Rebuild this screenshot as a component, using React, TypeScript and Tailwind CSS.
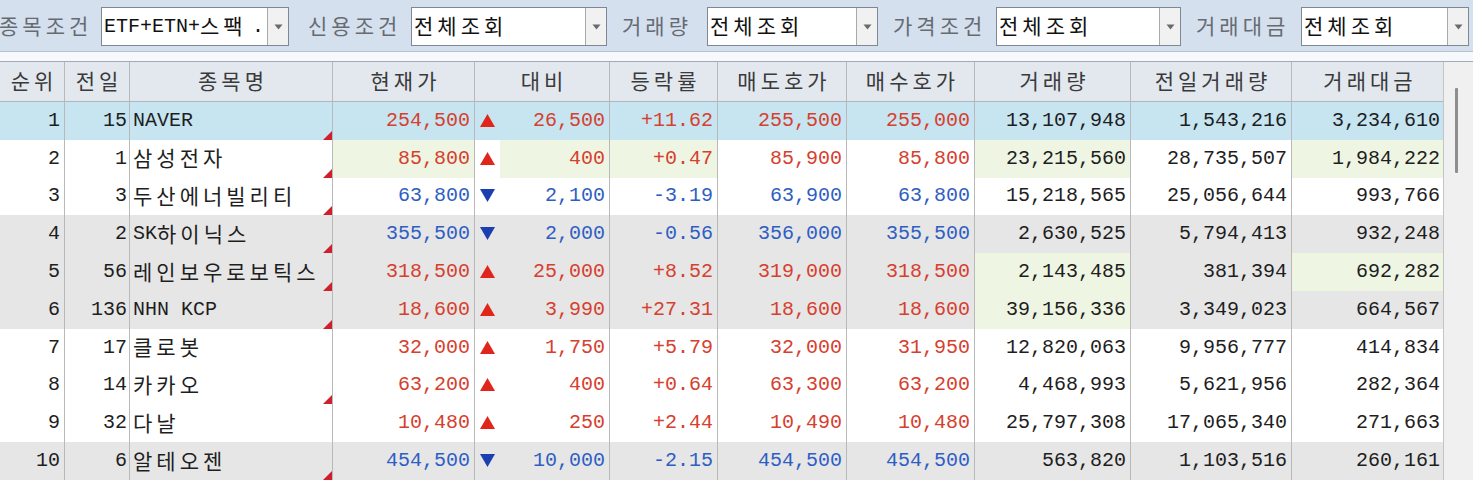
import React from 'react';

const KO_SPLIT = /([\uAC00-\uD7A3]+)/;
const KO_TEST = /[\uAC00-\uD7A3]/;

function Tx({ s }: { s: string }) {
  const parts = s.split(KO_SPLIT).filter((p) => p !== '');
  return (
    <>
      {parts.map((p, i) =>
        KO_TEST.test(p) ? (
          <span
            key={i}
            className={`relative -top-[1px] font-['Noto_Sans_CJK_KR'] text-[21px] tracking-[4px] ${i === parts.length - 1 ? '-mr-[4px]' : ''}`}
          >
            {p}
          </span>
        ) : (
          <span key={i}>{p}</span>
        )
      )}
    </>
  );
}

type GreenKey = 'cur' | 'diff' | 'rate' | 'vol' | 'amt';
type Row = {
  r: string;
  p: string;
  name: string;
  cur: string;
  up: boolean;
  diff: string;
  rate: string;
  ask: string;
  bid: string;
  vol: string;
  pvol: string;
  amt: string;
  bg: 'sel' | 'w' | 'g';
  green: GreenKey[];
  mark: boolean;
};

const rows: Row[] = [
  { r: '1', p: '15', name: 'NAVER', cur: '254,500', up: true, diff: '26,500', rate: '+11.62', ask: '255,500', bid: '255,000', vol: '13,107,948', pvol: '1,543,216', amt: '3,234,610', bg: 'sel', green: [], mark: true },
  { r: '2', p: '1', name: '삼성전자', cur: '85,800', up: true, diff: '400', rate: '+0.47', ask: '85,900', bid: '85,800', vol: '23,215,560', pvol: '28,735,507', amt: '1,984,222', bg: 'w', green: ['cur', 'diff', 'rate', 'vol', 'amt'], mark: true },
  { r: '3', p: '3', name: '두산에너빌리티', cur: '63,800', up: false, diff: '2,100', rate: '-3.19', ask: '63,900', bid: '63,800', vol: '15,218,565', pvol: '25,056,644', amt: '993,766', bg: 'w', green: [], mark: true },
  { r: '4', p: '2', name: 'SK하이닉스', cur: '355,500', up: false, diff: '2,000', rate: '-0.56', ask: '356,000', bid: '355,500', vol: '2,630,525', pvol: '5,794,413', amt: '932,248', bg: 'g', green: [], mark: true },
  { r: '5', p: '56', name: '레인보우로보틱스', cur: '318,500', up: true, diff: '25,000', rate: '+8.52', ask: '319,000', bid: '318,500', vol: '2,143,485', pvol: '381,394', amt: '692,282', bg: 'g', green: ['vol', 'amt'], mark: true },
  { r: '6', p: '136', name: 'NHN KCP', cur: '18,600', up: true, diff: '3,990', rate: '+27.31', ask: '18,600', bid: '18,600', vol: '39,156,336', pvol: '3,349,023', amt: '664,567', bg: 'g', green: ['vol'], mark: true },
  { r: '7', p: '17', name: '클로봇', cur: '32,000', up: true, diff: '1,750', rate: '+5.79', ask: '32,000', bid: '31,950', vol: '12,820,063', pvol: '9,956,777', amt: '414,834', bg: 'w', green: [], mark: false },
  { r: '8', p: '14', name: '카카오', cur: '63,200', up: true, diff: '400', rate: '+0.64', ask: '63,300', bid: '63,200', vol: '4,468,993', pvol: '5,621,956', amt: '282,364', bg: 'w', green: [], mark: true },
  { r: '9', p: '32', name: '다날', cur: '10,480', up: true, diff: '250', rate: '+2.44', ask: '10,490', bid: '10,480', vol: '25,797,308', pvol: '17,065,340', amt: '271,663', bg: 'w', green: [], mark: false },
  { r: '10', p: '6', name: '알테오젠', cur: '454,500', up: false, diff: '10,000', rate: '-2.15', ask: '454,500', bid: '454,500', vol: '563,820', pvol: '1,103,516', amt: '260,161', bg: 'g', green: [], mark: true },
];

function Caret() {
  return (
    <svg width="9" height="6" viewBox="0 0 9 6">
      <polygon points="0.5,0.5 8.5,0.5 4.5,5.5" fill="#6a6a6a" />
    </svg>
  );
}

function Combo({ w, text, dot }: { w: string; text: string; dot?: boolean }) {
  return (
    <div className={`${w} h-[39px] flex bg-white border border-[#7d8894]`}>
      <div className="flex-1 flex items-center pl-[2px] pr-[3px] text-[#111] overflow-hidden whitespace-nowrap">
        <Tx s={text} />
        {dot ? <span className="ml-auto">.</span> : null}
      </div>
      <div className="w-[21px] flex items-center justify-center bg-[#f1f1f1] border-l border-[#a9a9a9]">
        <Caret />
      </div>
    </div>
  );
}

function Label({ w, pl, text, extra }: { w: string; pl: string; text: string; extra?: string }) {
  return (
    <div className={`${w} ${pl} ${extra ?? ''} flex items-center text-[#666b72] whitespace-nowrap`}>
      <Tx s={text} />
    </div>
  );
}

function Arrow({ up }: { up: boolean }) {
  return up ? (
    <svg width="15" height="13" viewBox="0 0 15 13">
      <polygon points="7.5,0 15,13 0,13" fill="#e0261b" />
    </svg>
  ) : (
    <svg width="15" height="13" viewBox="0 0 15 13">
      <polygon points="0,0 15,0 7.5,13" fill="#1c3fb0" />
    </svg>
  );
}

function Marker() {
  return (
    <svg className="absolute right-0 bottom-0" width="9" height="9" viewBox="0 0 9 9">
      <polygon points="0,9 9,0 9,9" fill="#cf1f2c" />
    </svg>
  );
}

const RED = 'text-[#d6402e]';
const BLUE = 'text-[#2e5ec3]';
const BLACK = 'text-[#1e1e1e]';

function NumCell({ v, color, green, last }: { v: string; color: string; green?: boolean; last?: boolean }) {
  return (
    <div
      className={`flex items-center justify-end pr-[4px] ${last ? '' : 'border-r border-[#b9b9b9]'} ${color} ${
        green ? 'bg-[#eef6e3]' : ''
      } whitespace-nowrap`}
    >
      {v}
    </div>
  );
}

function DataRow({ row }: { row: Row }) {
  const bg = row.bg === 'sel' ? 'bg-[#c7e5f1]' : row.bg === 'g' ? 'bg-[#e6e6e6]' : 'bg-white';
  const c = row.up ? RED : BLUE;
  const g = (k: GreenKey) => row.bg !== 'sel' && row.green.includes(k);
  return (
    <div
      className={`grid grid-cols-[65px_65px_203px_142px_25px_110px_108px_129px_128px_156px_161px_152px] h-[37.8px] ${bg}`}
    >
      <NumCell v={row.r} color={BLACK} />
      <div className={`flex items-center justify-end pr-[2px] border-r border-[#b9b9b9] ${BLACK}`}>{row.p}</div>
      <div className={`relative flex items-center pl-[3px] border-r border-[#b9b9b9] ${BLACK} whitespace-nowrap`}>
        <Tx s={row.name} />
        {row.mark ? <Marker /> : null}
      </div>
      <NumCell v={row.cur} color={c} green={g('cur')} />
      <div className="flex items-center pl-[5px] pb-[1px]">
        <Arrow up={row.up} />
      </div>
      <NumCell v={row.diff} color={c} green={g('diff')} />
      <NumCell v={row.rate} color={c} green={g('rate')} />
      <NumCell v={row.ask} color={c} />
      <NumCell v={row.bid} color={c} />
      <NumCell v={row.vol} color={BLACK} green={g('vol')} />
      <NumCell v={row.pvol} color={BLACK} />
      <NumCell v={row.amt} color={BLACK} green={g('amt')} last />
    </div>
  );
}

const headers: [string, string][] = [
  ['순위', ''],
  ['전일', ''],
  ['종목명', ''],
  ['현재가', ''],
  ['대비', ''],
  ['등락률', ''],
  ['매도호가', ''],
  ['매수호가', ''],
  ['거래량', ''],
  ['전일거래량', ''],
  ['거래대금', 'last'],
];

export default function App() {
  return (
    <div className="w-[1473px] h-[480px] overflow-hidden bg-white font-['Liberation_Mono','Noto_Sans_CJK_KR',monospace] text-[20px] leading-none">
      {/* toolbar */}
      <div className="h-[52px] bg-[#d5e0ee] border-b border-[#b4c0cf] flex items-start pt-[7px]">
        <Label w="w-[102px]" pl="pl-0" extra="-ml-[1px] h-[39px]" text="종목조건" />
        <Combo w="w-[188px]" text="ETF+ETN+스팩" dot />
        <Label w="w-[122px]" pl="pl-[19px]" extra="h-[39px]" text="신용조건" />
        <Combo w="w-[196px]" text="전체조회" />
        <Label w="w-[100px]" pl="pl-[15px]" extra="h-[39px]" text="거래량" />
        <Combo w="w-[171px]" text="전체조회" />
        <Label w="w-[118px]" pl="pl-[15px]" extra="h-[39px]" text="가격조건" />
        <Combo w="w-[185px]" text="전체조회" />
        <Label w="w-[120px]" pl="pl-[15px]" extra="h-[39px]" text="거래대금" />
        <Combo w="w-[168px]" text="전체조회" />
      </div>
      <div className="h-[9px] bg-[#f6f8fb]" />
      {/* grid */}
      <div className="flex border-t border-[#a3abb5]">
        <div className="w-[1443px]">
          <div className="grid grid-cols-[65px_65px_203px_142px_135px_108px_129px_128px_156px_161px_152px] h-[40px] bg-[#e3e8ef] border-b border-[#b0b6be] text-[#3a3a3a]">
            {headers.map(([h, l]) => (
              <div
                key={h}
                className={`flex items-center justify-center whitespace-nowrap ${l ? '' : 'border-r border-[#b9b9b9]'}`}
              >
                <Tx s={h} />
              </div>
            ))}
          </div>
          {rows.map((r) => (
            <DataRow key={r.r} row={r} />
          ))}
        </div>
        <div className="w-[30px] bg-[#f0f0f0] border-l border-[#c4c4c4] flex flex-col items-start pl-[11px] pt-[26px]">
          <div className="w-[3px] h-[85px] bg-[#8e8e8e] rounded-[1px]" />
        </div>
      </div>
    </div>
  );
}
